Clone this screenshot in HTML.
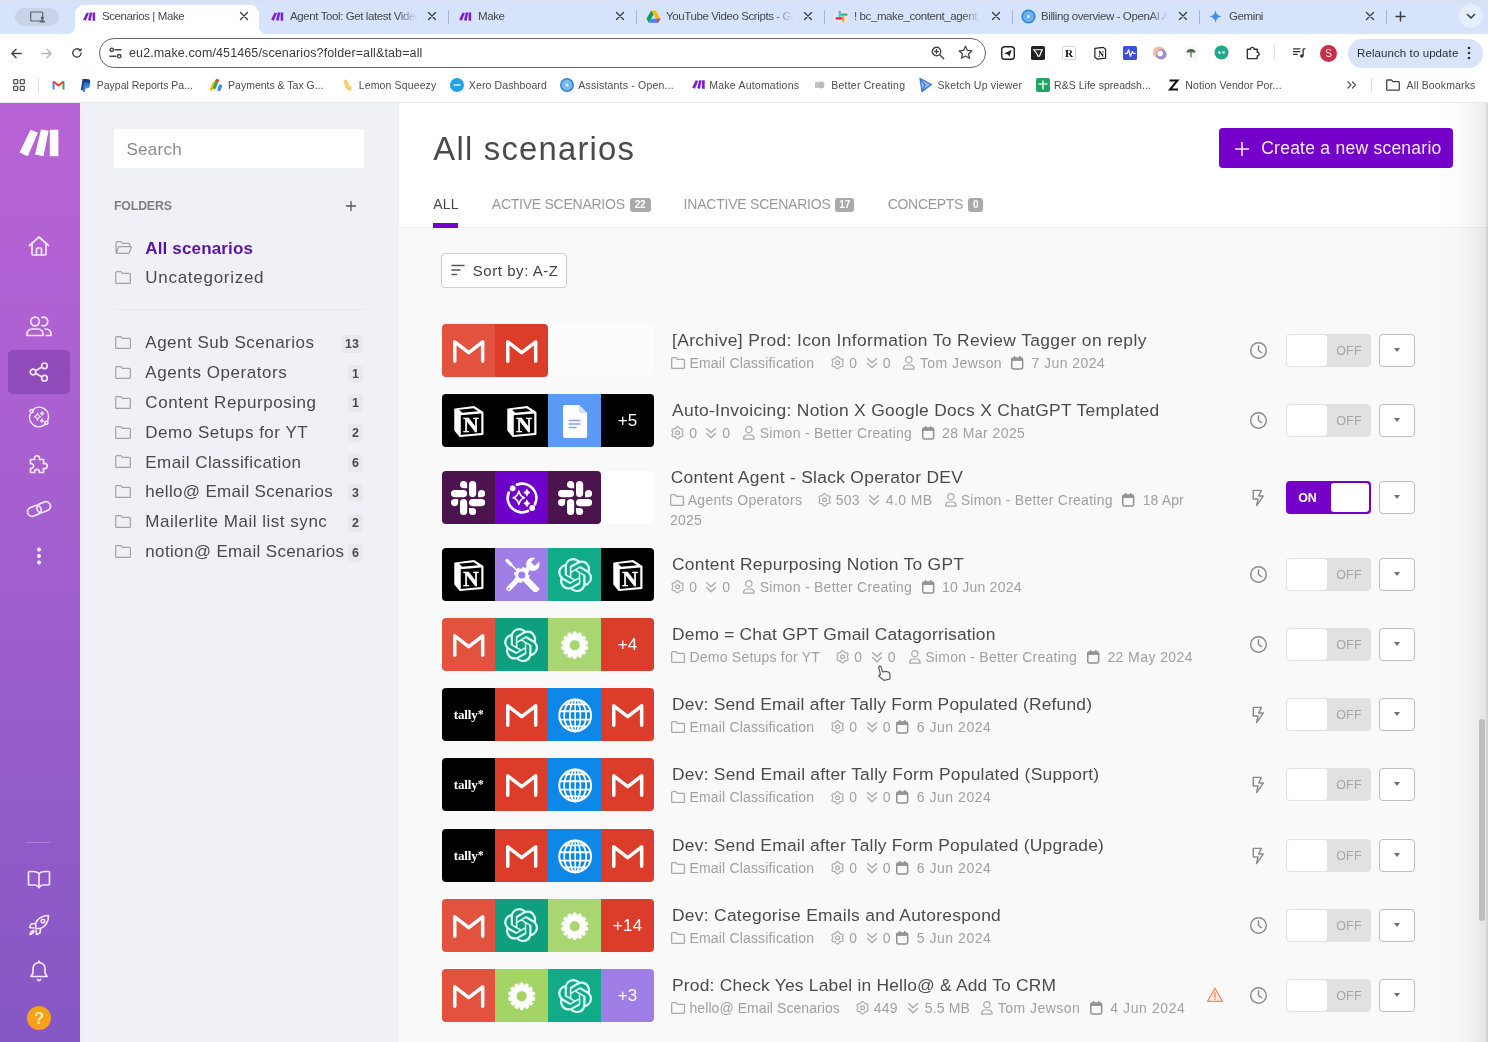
<!DOCTYPE html>
<html lang="en">
<head>
<meta charset="utf-8">
<title>Scenarios | Make</title>
<style>
*{box-sizing:border-box;margin:0;padding:0}
html,body{width:1488px;height:1042px;overflow:hidden;background:#fff}
body{font-family:"Liberation Sans",sans-serif;position:relative;color:#444;-webkit-font-smoothing:antialiased;opacity:.999}
.abs{position:absolute}
svg{display:block;overflow:visible}
/* ---------- browser chrome ---------- */
#tabs{position:absolute;left:0;top:0;width:1488px;height:33.500px;background:linear-gradient(180deg,#d9dfec 0,#d7e2f9 2px,#d7e3fb 3px)}
#tabs .active{position:absolute;left:75px;top:4.500px;width:184px;height:29px;background:#fff;border-radius:9px 9px 0 0}
#tabs .active:before,#tabs .active:after{content:"";position:absolute;bottom:0;width:8px;height:8px}
#tabs .active:before{left:-8px;background:radial-gradient(circle at 0 0,transparent 8px,#fff 8.5px)}
#tabs .active:after{right:-8px;background:radial-gradient(circle at 100% 0,transparent 8px,#fff 8.5px)}
.tt{position:absolute;top:9px;height:15px;line-height:15px;font-size:11.5px;letter-spacing:-.4px;color:#45484c;white-space:nowrap;overflow:hidden}
.tt.f:after{content:"";position:absolute;right:0;top:0;width:18px;height:100%;background:linear-gradient(90deg,rgba(215,227,251,0),#d7e3fb)}
.tx{position:absolute;top:11px;width:10px;height:10px}
.tsep{position:absolute;top:10px;width:1px;height:14px;background:#a9b6d3}
.fav{position:absolute;top:9px;width:15px;height:15px}
#bar{position:absolute;left:0;top:34px;width:1488px;height:36px;background:#fff}
#url{position:absolute;left:98.500px;top:4px;width:887px;height:30px;border:1.800px solid #666;border-radius:15px;background:#fff}
#url .u{position:absolute;left:29.5px;top:6px;font-size:12.5px;line-height:17px;color:#3a3a3a;white-space:nowrap}
#bm{position:absolute;left:0;top:70px;width:1488px;height:32.600px;background:#fff;border-bottom:1px solid #e9e9ea;z-index:5}
.bt{position:absolute;top:8px;height:14px;line-height:14px;font-size:10.500px;color:#4c4c4c;white-space:nowrap}
.bi{position:absolute;top:8px;width:14px;height:14px}
/* ---------- app ---------- */
#rail{position:absolute;left:0;top:102px;width:80px;height:940px;background:linear-gradient(180deg,#b863d5 0%,#aa60d1 35%,#9b5dcc 60%,#8558c5 100%)}
#rail .act{position:absolute;left:8px;top:247.700px;width:61.500px;height:44.500px;border-radius:5px;background:rgba(110,50,160,.45)}
#rail svg{position:absolute}
#fold{position:absolute;left:80px;top:102px;width:319px;height:940px;background:#eff1f6;box-shadow:inset 1.500px 0 0 #f4ebfc}
#search{position:absolute;left:34px;top:26.500px;width:250px;height:39.500px;background:#fff;border-radius:3px;font-size:17px;line-height:41px;padding-left:12.5px;color:#8b8b8b;letter-spacing:.25px}
.fh{position:absolute;left:34px;top:97.3px;font-size:12.3px;line-height:14px;font-weight:bold;color:#7f7f7f;letter-spacing:-.15px}
.fi{position:absolute;left:34.5px;width:17px;height:15px}
.fn{position:absolute;left:65.3px;font-size:17px;line-height:22px;color:#4a4a4a;white-space:nowrap}
.fn.sel{font-weight:bold;color:#5b13a3}
.fc{position:absolute;right:36.3px;min-width:13.7px;height:18px;border-radius:4px;background:#e8e9ed;font-size:12.5px;line-height:18px;font-weight:bold;color:#4a4a4a;text-align:center;padding:0 3.8px}
#main{position:absolute;left:399px;top:102px;width:1089px;height:940px;background:#f9f9f9}
#hdr{position:absolute;left:0;top:0;width:1089px;height:125.500px;background:#fff;border-bottom:1px solid #f0f0f0}
#h1{position:absolute;left:34.300px;top:25.800px;font-size:32.800px;line-height:42px;color:#4a4a4a;font-weight:normal;white-space:nowrap}
#create{position:absolute;left:819.700px;top:26.300px;width:234.500px;height:39.800px;border-radius:4px;background:#7500c9;color:#f6eaff;font-size:17.500px;line-height:40.800px;white-space:nowrap}
#create span{position:absolute;left:42.5px;top:0}
.tab{position:absolute;top:94px;font-size:14px;line-height:17px;color:#999;white-space:nowrap}
.tab.on{color:#484848}
.tb{position:absolute;top:95.700px;height:14.600px;letter-spacing:-.2px;border-radius:3px;background:#aaa;color:#fff;font-size:10px;line-height:14px;font-weight:bold;text-align:center}
#ul{position:absolute;left:34px;top:120.600px;width:25.200px;height:5.400px;background:#7500c9}
#sort{position:absolute;left:42.3px;top:151.3px;width:126px;height:35px;border:1px solid #cfcfcf;border-radius:4px;background:#fff;font-size:15px;line-height:33px;color:#444;white-space:nowrap}
#sort span{position:absolute;left:30.5px;top:0}
/* rows */
.row{position:absolute;left:0;width:1089px;height:53px}
.ic{position:absolute;left:42.6px;top:0;width:212.6px;height:53px;border-radius:4px}
.ig{position:absolute;left:0;top:0;height:53px;border-radius:4px;overflow:hidden;display:flex}
.ig>div{width:53.15px;height:53px;position:relative;flex:none}
.ig svg{position:absolute;left:0;top:0;width:53.15px;height:53px}
.pl{color:#fff;font-size:17px;line-height:53px;text-align:center;letter-spacing:.2px}
.tly{color:#fff;font-family:"Liberation Serif",serif;font-weight:bold;font-size:13px;line-height:54px;text-align:center;letter-spacing:-.1px;padding-left:1px}
.tly sup{font-size:12px;vertical-align:1.500px;line-height:0}
.ti{position:absolute;font-size:17.4px;line-height:22px;color:#4b4b4b;white-space:nowrap}
.m{position:absolute;font-size:14px;line-height:18px;color:#a0a0a0;white-space:nowrap}
.mi{position:absolute;width:16px;height:16px;color:#a9a9a9}
.mi.c{color:#919191}
.tg{position:absolute;left:887px;top:10px;width:85px;height:33px;border-radius:4px;background:#e1e1e1;border:1px solid #e1e1e1;overflow:hidden}
.tg i{position:absolute;left:0;top:0;width:40px;height:31px;background:#fff;border-radius:3px}
.tg b{position:absolute;left:40px;top:0;width:44px;line-height:33.500px;font-size:12.500px;font-weight:normal;color:#a6a6a6;text-align:center;letter-spacing:.2px}
.tg.on{background:#7500c9;border:2px solid #7500c9}
.tg.on i{left:43px;width:38px;height:29px}
.tg.on b{left:0;width:39px;color:#fff;line-height:30px;font-size:12.500px;font-weight:bold;letter-spacing:0}
.dd{position:absolute;left:979.700px;top:10px;width:36.200px;height:33px;border:1px solid #bdbdbd;border-radius:4px;background:#fff}
.dd:after{content:"";position:absolute;left:13.900px;top:13px;border:3.500px solid transparent;border-top:4px solid #6e6e6e;border-bottom:0}
.st{position:absolute;left:849.5px;top:17px;width:19px;height:19px;color:#8a8a8a}
#sb{position:absolute;left:1034px;top:0;width:55px;height:940px;background:linear-gradient(90deg,rgba(0,0,0,0) 0%,rgba(0,0,0,.008) 35%,rgba(0,0,0,.03) 70%,rgba(0,0,0,.075) 92%,rgba(0,0,0,.085) 96.500%,rgba(0,0,0,.17) 98%,rgba(0,0,0,.17) 100%);pointer-events:none}
#sb i{position:absolute;left:45.500px;top:616.500px;width:6.500px;height:202.500px;border-radius:3.500px;background:#bfbfbf}
</style>
</head>
<body>
<svg width="0" height="0" style="position:absolute">
<defs>
<symbol id="gmail" viewBox="0 0 53 53"><path d="M12.700 37.200V17.800L26.650 28.700 40.600 17.800V37.200" fill="none" stroke="#fff" stroke-width="3.500" stroke-linejoin="round" stroke-linecap="round"/></symbol>
<symbol id="notion" viewBox="0 0 53 53">
<path d="M13 15.200 32 12.800l8.600 5.500v21.800L18 42.300 13 36.300z" fill="#fff" stroke="#fff" stroke-width="1.600" stroke-linejoin="round"/>
<path d="M17 15.800 31.500 14.300l4.500 2.900-15.800 1.600z" fill="#000"/>
<path d="M18.700 21.300 39.200 19.400V39.100L18.700 40.900z" fill="#000"/>
<text x="28.900" y="37.500" font-family="Liberation Serif,serif" font-weight="bold" font-size="21.500" text-anchor="middle" fill="#fff" stroke="#fff" stroke-width=".5">N</text>
</symbol>
<symbol id="gdocs" viewBox="0 0 53 53"><path d="M17 11h14l8 8v23a2 2 0 0 1-2 2H17a2 2 0 0 1-2-2V13a2 2 0 0 1 2-2z" fill="#fff"/><path d="M31 11v6a2 2 0 0 0 2 2h6z" fill="#cfe1fb"/><path d="M20.5 26.5h12M20.5 30h12M20.5 33.500h8" stroke="#86a5ea" stroke-width="1.700"/></symbol>
<symbol id="slack" viewBox="0 0 24 24"><path fill="#fff" d="M5.042 15.165a2.528 2.528 0 0 1-2.52 2.523A2.528 2.528 0 0 1 0 15.165a2.527 2.527 0 0 1 2.522-2.52h2.52v2.52zM6.313 15.165a2.527 2.527 0 0 1 2.521-2.52 2.527 2.527 0 0 1 2.521 2.52v6.313A2.528 2.528 0 0 1 8.834 24a2.528 2.528 0 0 1-2.521-2.522v-6.313zM8.834 5.042a2.528 2.528 0 0 1-2.521-2.52A2.528 2.528 0 0 1 8.834 0a2.528 2.528 0 0 1 2.521 2.522v2.52H8.834zM8.834 6.313a2.528 2.528 0 0 1 2.521 2.521 2.528 2.528 0 0 1-2.521 2.521H2.522A2.528 2.528 0 0 1 0 8.834a2.528 2.528 0 0 1 2.522-2.521h6.312zM18.956 8.834a2.528 2.528 0 0 1 2.522-2.521A2.528 2.528 0 0 1 24 8.834a2.528 2.528 0 0 1-2.522 2.521h-2.522V8.834zM17.688 8.834a2.528 2.528 0 0 1-2.523 2.521 2.527 2.527 0 0 1-2.52-2.521V2.522A2.527 2.527 0 0 1 15.165 0a2.528 2.528 0 0 1 2.523 2.522v6.312zM15.165 18.956a2.528 2.528 0 0 1 2.523 2.522A2.528 2.528 0 0 1 15.165 24a2.527 2.527 0 0 1-2.52-2.522v-2.522h2.52zM15.165 17.688a2.527 2.527 0 0 1-2.52-2.523 2.526 2.526 0 0 1 2.52-2.520h6.313A2.527 2.527 0 0 1 24 15.165a2.528 2.528 0 0 1-2.522 2.523h-6.313z"/></symbol>
<symbol id="openai" viewBox="0 0 24 24"><path fill="#d9fff3" d="M22.2819 9.8211a5.9847 5.9847 0 0 0-.5157-4.9108 6.0462 6.0462 0 0 0-6.5098-2.9A6.0651 6.0651 0 0 0 4.9807 4.1818a5.9847 5.9847 0 0 0-3.9977 2.9 6.0462 6.0462 0 0 0 .7427 7.0966 5.98 5.98 0 0 0 .511 4.9107 6.051 6.051 0 0 0 6.5146 2.9001A5.9847 5.9847 0 0 0 13.2599 24a6.0557 6.0557 0 0 0 5.7718-4.2058 5.9894 5.9894 0 0 0 3.9977-2.9001 6.0557 6.0557 0 0 0-.7475-7.0729zm-9.022 12.6081a4.4755 4.4755 0 0 1-2.8764-1.0408l.1419-.0804 4.7783-2.7582a.7948.7948 0 0 0 .3927-.6813v-6.7369l2.02 1.1686a.071.071 0 0 1 .038.052v5.5826a4.504 4.504 0 0 1-4.4945 4.4944zm-9.6607-4.1254a4.4708 4.4708 0 0 1-.5346-3.0137l.142.0852 4.783 2.7582a.7712.7712 0 0 0 .7806 0l5.8428-3.3685v2.3324a.0804.0804 0 0 1-.0332.0615L9.74 19.9502a4.4992 4.4992 0 0 1-6.1408-1.6464zM2.3408 7.8956a4.485 4.485 0 0 1 2.3655-1.9728V11.6a.7664.7664 0 0 0 .3879.6765l5.8144 3.3543-2.0201 1.1685a.0757.0757 0 0 1-.071 0l-4.8303-2.7865A4.504 4.504 0 0 1 2.3408 7.872zm16.5963 3.8558L13.1038 8.364 15.1192 7.2a.0757.0757 0 0 1 .071 0l4.8303 2.7913a4.4944 4.4944 0 0 1-.6765 8.1042v-5.6772a.79.79 0 0 0-.407-.667zm2.0107-3.0231l-.142-.0852-4.7735-2.7818a.7759.7759 0 0 0-.7854 0L9.409 9.2297V6.8974a.0662.0662 0 0 1 .0284-.0615l4.8303-2.7866a4.4992 4.4992 0 0 1 6.6802 4.66zM8.3065 12.863l-2.02-1.1638a.0804.0804 0 0 1-.038-.0567V6.0742a4.4992 4.4992 0 0 1 7.3757-3.4537l-.142.0805L8.704 5.459a.7948.7948 0 0 0-.3927.6813zm1.0976-2.3654l2.602-1.4998 2.6069 1.4998v2.9994l-2.5974 1.4997-2.6067-1.4997Z"/></symbol>
<symbol id="gear" viewBox="0 0 53 53"><path d="M24.65 16.48L25.23 13.97L27.97 13.97L28.55 16.48L29.50 16.69L31.11 14.69L33.57 15.88L33.01 18.38L33.77 18.99L36.09 17.88L37.80 20.02L36.20 22.03L36.62 22.92L39.19 22.92L39.80 25.59L37.49 26.71L37.49 27.69L39.80 28.81L39.19 31.48L36.62 31.48L36.20 32.37L37.80 34.38L36.09 36.52L33.77 35.41L33.01 36.02L33.57 38.52L31.11 39.71L29.50 37.71L28.55 37.92L27.97 40.43L25.23 40.43L24.65 37.92L23.70 37.71L22.09 39.71L19.63 38.52L20.19 36.02L19.43 35.41L17.11 36.52L15.40 34.38L17.00 32.37L16.58 31.48L14.01 31.48L13.40 28.81L15.71 27.69L15.71 26.71L13.40 25.59L14.01 22.92L16.58 22.92L17.00 22.03L15.40 20.02L17.11 17.88L19.43 18.99L20.19 18.38L19.63 15.88L22.09 14.69L23.70 16.69zM32.10 27.20A5.5 5.5 0 1 0 21.10 27.20A5.5 5.5 0 1 0 32.10 27.20z" fill="#fff" fill-rule="evenodd" stroke="#fff" stroke-width=".8" stroke-linejoin="round"/></symbol>
<symbol id="globe" viewBox="0 0 53 53"><g fill="none" stroke="#fff" stroke-width="2"><circle cx="27.100" cy="27.400" r="15.900"/><ellipse cx="27.100" cy="27.400" rx="5.300" ry="15.900" stroke-width="1.700"/><ellipse cx="27.100" cy="27.400" rx="11" ry="15.900" stroke-width="1.700"/><path d="M27.100 11.500v31.800" stroke-width="1.500"/><path d="M11.800 23.200h30.600M11.800 31.600h30.600M16 16.400h22.200M16 38.400h22.200" stroke-width="1.900"/></g></symbol>
<symbol id="tools" viewBox="0 0 53 53">
<mask id="tm"><rect width="53" height="53" fill="#fff"/><path d="M37.800 16.200 46 8" stroke="#000" stroke-width="5.400"/><circle cx="26.700" cy="27" r="3.600" fill="#000"/><circle cx="13.700" cy="40.700" r="1" fill="#000"/></mask>
<g mask="url(#tm)"><g stroke="#fff" fill="none">
<path d="M12 12.600 15.800 16.400" stroke-width="3.400" stroke-linecap="round"/><path d="M15 15.500 23.500 24" stroke-width="1.700"/>
<path d="M30 30.500 40.300 41" stroke-width="6.400" stroke-linecap="square"/>
<path d="M13.900 40.500 23.500 30.500" stroke-width="5" stroke-linecap="round"/>
<path d="M29.500 24 34.500 19" stroke-width="4.400"/></g>
<circle cx="37.800" cy="16.300" r="6.700" fill="#fff"/>
<circle cx="26.700" cy="27" r="6.500" fill="#fff"/>
<circle cx="26.700" cy="27" r="7" fill="none" stroke="#fff" stroke-width="1.800" stroke-dasharray="2.750 2.750"/></g></symbol>
<symbol id="agent" viewBox="0 0 53 53"><g fill="none" stroke="#fff" stroke-width="2.800" stroke-linecap="round"><path d="M21.900 13.650A14.300 14.300 0 0 1 39.850 33.270"/><path d="M32.800 40.060A14.300 14.300 0 0 1 13.740 21.640"/></g><circle cx="17.600" cy="17.300" r="2.900" fill="#fff"/><circle cx="37.100" cy="37" r="2.900" fill="#fff"/><path d="M23.80 20.10Q25.03 25.25 29.40 26.70Q25.03 28.15 23.80 33.30Q22.57 28.15 18.20 26.70Q22.57 25.25 23.80 20.10z" fill="none" stroke="#fff" stroke-width="1.700" stroke-linejoin="round"/><path d="M31.80 18.00Q32.50 20.81 35.00 21.60Q32.50 22.39 31.80 25.20Q31.10 22.39 28.60 21.60Q31.10 20.81 31.80 18.00zM31.80 28.80Q32.50 31.61 35.00 32.40Q32.50 33.19 31.80 36.00Q31.10 33.19 28.60 32.40Q31.10 31.61 31.80 28.80z" fill="#fff" stroke="#fff" stroke-width=".6" stroke-linejoin="round"/></symbol>
<!-- meta icons -->
<symbol id="mfolder" viewBox="0 0 16 16"><path d="M1.650 .650h3.300l1.700 1.800h5.800a1 1 0 0 1 1 1v7a1 1 0 0 1-1 1H1.650a1 1 0 0 1-1-1V1.650a1 1 0 0 1 1-1z" fill="none" stroke="currentColor" stroke-width="1.300" stroke-linejoin="round"/></symbol>
<symbol id="mgear" viewBox="0 0 16 16"><path d="M6.55 0.55L7.08 0.67L7.56 1.01L7.96 1.49L8.29 1.98L8.58 2.40L8.90 2.68L9.30 2.82L9.81 2.86L10.40 2.90L11.01 3.01L11.55 3.25L11.92 3.65L12.08 4.17L12.02 4.76L11.81 5.34L11.55 5.87L11.33 6.33L11.25 6.75L11.33 7.17L11.55 7.63L11.81 8.16L12.02 8.74L12.08 9.33L11.92 9.85L11.55 10.25L11.01 10.49L10.40 10.60L9.81 10.64L9.30 10.68L8.90 10.82L8.58 11.10L8.29 11.52L7.96 12.01L7.56 12.49L7.08 12.83L6.55 12.95L6.02 12.83L5.54 12.49L5.14 12.01L4.81 11.52L4.52 11.10L4.20 10.82L3.80 10.68L3.29 10.64L2.70 10.60L2.09 10.49L1.55 10.25L1.18 9.85L1.02 9.33L1.08 8.74L1.29 8.16L1.55 7.63L1.77 7.17L1.85 6.75L1.77 6.33L1.55 5.87L1.29 5.34L1.08 4.76L1.02 4.17L1.18 3.65L1.55 3.25L2.09 3.01L2.70 2.90L3.29 2.86L3.80 2.82L4.20 2.68L4.52 2.40L4.81 1.98L5.14 1.49L5.54 1.01L6.02 0.67z" fill="none" stroke="currentColor" stroke-width="1.200" stroke-linejoin="round"/><circle cx="6.550" cy="6.750" r="1.900" fill="none" stroke="currentColor" stroke-width="1.200"/></symbol>
<symbol id="mchev" viewBox="0 0 16 16"><path d="M.700 .700 5.050 4.800 9.400 .700M.700 5.600 5.050 9.700 9.400 5.600" fill="none" stroke="currentColor" stroke-width="1.400" stroke-linecap="round" stroke-linejoin="round"/></symbol>
<symbol id="muser" viewBox="0 0 16 16"><circle cx="5.850" cy="3.700" r="3.100" fill="none" stroke="currentColor" stroke-width="1.200"/><path d="M.600 13.200v-.800a3.400 3.400 0 0 1 3.400-3.400h3.700a3.400 3.400 0 0 1 3.400 3.400v.800z" fill="none" stroke="currentColor" stroke-width="1.200" stroke-linejoin="round"/></symbol>
<symbol id="mcal" viewBox="0 0 16 16"><rect x=".750" y="1.900" width="10.900" height="11.150" rx="1.700" fill="none" stroke="currentColor" stroke-width="1.500"/><path d="M.750 3.600h10.900" stroke="currentColor" stroke-width="2.600"/><path d="M3.600 .600v2M8.800 .600v2" stroke="currentColor" stroke-width="1.500" stroke-linecap="round"/></symbol>
<symbol id="clock" viewBox="0 0 20 20"><circle cx="10" cy="10" r="8.200" fill="none" stroke="currentColor" stroke-width="1.500"/><path d="M10 5.200V10l3.200 2.200" fill="none" stroke="currentColor" stroke-width="1.500" stroke-linecap="round" stroke-linejoin="round"/></symbol>
<symbol id="bolt" viewBox="0 0 20 20"><path d="M4.500 2.500h8.500l-2.800 6h4.800L8 18.500l1.500-7H4.500z" fill="none" stroke="currentColor" stroke-width="1.500" stroke-linejoin="round"/></symbol>
<symbol id="warn" viewBox="0 0 20 20"><path d="M10 2.500 18.300 17H1.700z" fill="#fde8df" stroke="#f08a5d" stroke-width="1.400" stroke-linejoin="round"/><path d="M10 7.500v5" stroke="#f08a5d" stroke-width="1.500" stroke-linecap="round"/><circle cx="10" cy="14.700" r=".9" fill="#f08a5d"/></symbol>
<symbol id="ffold" viewBox="0 0 18 16"><path d="M1.700 1.800h4.600l1.700 1.900h7.300a1 1 0 0 1 1 1v8.600a1 1 0 0 1-1 1H1.700a1 1 0 0 1-1-1V2.800a1 1 0 0 1 1-1z" fill="none" stroke="#a3a3a3" stroke-width="1.300" stroke-linejoin="round"/></symbol>
<symbol id="ffoldo" viewBox="0 0 18 16"><path d="M1 13.500V2.800a1 1 0 0 1 1-1h4.300L8 3.700h6.500a1 1 0 0 1 1 1v2M1.200 14.200l2.300-6.500a1 1 0 0 1 1-.7h12.200a.7.700 0 0 1 .6 1l-2.100 5.600a1 1 0 0 1-1 .7H1.700a.6.600 0 0 1-.5-.100z" fill="none" stroke="#a3a3a3" stroke-width="1.300" stroke-linejoin="round"/></symbol>
<symbol id="mk" viewBox="0 0 40 28"><path d="M11.500 .800 19 3.400 8.800 27.200 .500 23.600z"/><path d="M22 .500l7.600 1.300L24.500 27.200 16 25.600z"/><path d="M30.800 .800h8.600v26.400h-8.600z"/></symbol>
<symbol id="tabx" viewBox="0 0 10 10"><path d="M1.500 1.500l7 7M8.500 1.500l-7 7" stroke="#3c4043" stroke-width="1.400" stroke-linecap="round"/></symbol>
</defs>
</svg>
<div id="tabs">
  <div class="abs" style="left:15px;top:8px;width:44px;height:18px;border-radius:9px;background:#c9d3e8"></div>
  <svg class="abs" style="left:30px;top:11px" width="16" height="12" viewBox="0 0 16 12"><rect x=".7" y="1" width="12" height="9" rx="1" fill="none" stroke="#5f6368" stroke-width="1.200"/><circle cx="12.300" cy="7" r="1.600" fill="#5f6368"/><path d="M9.500 11.500a2.800 2.300 0 0 1 5.600 0z" fill="#5f6368"/></svg>
  <div class="active"></div>
  <svg class="fav" style="left:83px;top:11.500px;width:12.500px;height:9px;fill:#7a1fd1"><use href="#mk"/></svg>
  <div class="tt" style="left:102px;width:130px">Scenarios | Make</div>
  <svg class="tx" style="left:239px"><use href="#tabx"/></svg>

  <svg class="fav" style="left:271px;top:11.500px;width:12.500px;height:9px;fill:#7a1fd1"><use href="#mk"/></svg>
  <div class="tt f" style="left:290px;width:127px">Agent Tool: Get latest Video</div>
  <svg class="tx" style="left:427px"><use href="#tabx"/></svg>
  <div class="tsep" style="left:448px"></div>

  <svg class="fav" style="left:459px;top:11.500px;width:12.500px;height:9px;fill:#7a1fd1"><use href="#mk"/></svg>
  <div class="tt" style="left:478px;width:127px">Make</div>
  <svg class="tx" style="left:615px"><use href="#tabx"/></svg>
  <div class="tsep" style="left:636px"></div>

  <svg class="fav" style="left:646px" viewBox="0 0 15 15"><path d="M5.200 1.500h4.600l4.700 8.200h-4.600z" fill="#fbbc04"/><path d="M5.200 1.500 .5 9.700l2.300 4 4.700-8.200z" fill="#0f9d58"/><path d="M5.100 9.700h9.400l-2.300 4H2.800z" fill="#4285f4"/><path d="M9.900 9.700h4.600l-2.300 4z" fill="#ea4335"/></svg>
  <div class="tt f" style="left:666px;width:127px">YouTube Video Scripts - Google</div>
  <svg class="tx" style="left:803px"><use href="#tabx"/></svg>
  <div class="tsep" style="left:824px"></div>

  <svg class="fav" style="left:834px" viewBox="0 0 15 15"><rect width="15" height="15" rx="7" fill="#e9e3ee"/><g stroke-width="2.200" stroke-linecap="round"><path d="M5.700 2.500v5" stroke="#36c5f0"/><path d="M12.500 5.700h-5" stroke="#2eb67d"/><path d="M9.300 12.500v-5" stroke="#ecb22e"/><path d="M2.500 9.300h5" stroke="#e01e5a"/></g></svg>
  <div class="tt f" style="left:854px;width:127px">! bc_make_content_agent_dev</div>
  <svg class="tx" style="left:991px"><use href="#tabx"/></svg>
  <div class="tsep" style="left:1012px"></div>

  <svg class="fav" style="left:1021px" viewBox="0 0 15 15"><circle cx="7.500" cy="7.500" r="6.300" fill="#6fb1ef" stroke="#2a86dd" stroke-width="1.600"/><circle cx="7.500" cy="7.500" r="1.500" fill="#d6ebff"/></svg>
  <div class="tt f" style="left:1041px;width:127px">Billing overview - OpenAI API</div>
  <svg class="tx" style="left:1178px"><use href="#tabx"/></svg>
  <div class="tsep" style="left:1199px"></div>

  <svg class="fav" style="left:1209px;top:10px;width:13px;height:13px" viewBox="0 0 14 14"><path d="M7 0q.6 6.400 7 7q-6.400.6-7 7q-.6-6.400-7-7q6.400-.6 7-7z" fill="#4b8be8"/></svg>
  <div class="tt" style="left:1229px;width:127px">Gemini</div>
  <svg class="tx" style="left:1365px"><use href="#tabx"/></svg>
  <div class="tsep" style="left:1386px"></div>
  <svg class="abs" style="left:1395px;top:11px" width="11" height="11" viewBox="0 0 11 11"><path d="M5.500 1v9M1 5.500h9" stroke="#3c4043" stroke-width="1.500" stroke-linecap="round"/></svg>
  <div class="abs" style="left:1459px;top:4px;width:24px;height:24px;border-radius:12px;background:#e6edfb"></div>
  <svg class="abs" style="left:1466px;top:13px" width="10" height="7" viewBox="0 0 10 7"><path d="M1.500 1.500 5 5l3.500-3.500" fill="none" stroke="#3c4043" stroke-width="1.600" stroke-linecap="round" stroke-linejoin="round"/></svg>
</div>
<div id="bar">
  <svg class="abs" style="left:10.500px;top:13.500px" width="11" height="11" viewBox="0 0 13 13"><path d="M12 6.500H1.500M6 1.500l-5 5 5 5" fill="none" stroke="#444" stroke-width="1.700" stroke-linecap="round" stroke-linejoin="round"/></svg>
  <svg class="abs" style="left:40.500px;top:13.500px" width="11" height="11" viewBox="0 0 13 13"><path d="M1 6.500h10.500M7 1.500l5 5-5 5" fill="none" stroke="#b5b5b5" stroke-width="1.500" stroke-linecap="round" stroke-linejoin="round"/></svg>
  <svg class="abs" style="left:71px;top:12.500px" width="12" height="12" viewBox="0 0 14 14"><path d="M11.800 7A4.900 4.900 0 1 1 10.300 3.400" fill="none" stroke="#444" stroke-width="1.500" stroke-linecap="round"/><path d="M12.300 1v4H8.300z" fill="#444"/></svg>
  <div id="url">
    <svg class="abs" style="left:9px;top:8px" width="13" height="12" viewBox="0 0 13 12"><g stroke="#444" stroke-width="1.400" fill="none" stroke-linecap="round"><path d="M6 2.800h6M1 9.200h6"/><circle cx="2.800" cy="2.800" r="1.700"/><circle cx="10.200" cy="9.200" r="1.700"/></g></svg>
    <div class="u" style="letter-spacing:0.12px">eu2.make.com/451465/scenarios?folder=all&amp;tab=all</div>
    <svg class="abs" style="left:831px;top:7px" width="14" height="14" viewBox="0 0 14 14"><g stroke="#444" stroke-width="1.400" fill="none" stroke-linecap="round"><circle cx="5.500" cy="5.500" r="4.200"/><path d="M8.700 8.700l4 4M3.700 5.500h3.600M5.500 3.700v3.600"/></g></svg>
    <svg class="abs" style="left:858px;top:6px" width="15" height="15" viewBox="0 0 15 15"><path d="M7.500 1.300l1.900 4.100 4.400.5-3.300 3 1 4.400-4-2.300-4 2.300 1-4.400-3.300-3 4.400-.5z" fill="none" stroke="#444" stroke-width="1.300" stroke-linejoin="round"/></svg>
  </div>
  <!-- extensions -->
  <svg class="abs" style="left:1000.5px;top:12.2px" width="14" height="14" viewBox="0 0 15 15"><rect x=".8" y=".8" width="13.400" height="13.400" rx="3" fill="#fff" stroke="#222" stroke-width="1.500"/><path d="M3.500 8 11.500 4 9 11.500 7.500 9z" fill="#222"/></svg>
  <svg class="abs" style="left:1030.5px;top:12.2px" width="14" height="14" viewBox="0 0 15 15"><rect width="15" height="15" rx="2" fill="#222"/><path d="M3 4h9l-3 7H7.500L6 7.500 4.500 6z" fill="none" stroke="#fff" stroke-width="1.300"/></svg>
  <svg class="abs" style="left:1061.5px;top:12.2px" width="14" height="14" viewBox="0 0 15 15"><rect x=".5" y=".5" width="14" height="14" rx="1.500" fill="#fff" stroke="#cfcfcf"/><text x="7.500" y="12" font-family="Liberation Serif,serif" font-weight="bold" font-size="12" text-anchor="middle" fill="#111">R</text></svg>
  <svg class="abs" style="left:1092.5px;top:12.2px" width="14" height="14" viewBox="0 0 15 15"><path d="M2 2.500 11 1.500 13.500 3.500V13L4.500 14 2 12z" fill="#fff" stroke="#222" stroke-width="1.300" stroke-linejoin="round"/><text x="8.600" y="11.500" font-family="Liberation Serif,serif" font-weight="bold" font-size="8.500" text-anchor="middle" fill="#111">N</text></svg>
  <svg class="abs" style="left:1122.5px;top:12.2px" width="14" height="14" viewBox="0 0 15 15"><rect width="15" height="15" rx="2" fill="#3d4fd8"/><path d="M2 8h2.500l1.500-4 2 7 2-5 1 2H13.500" fill="none" stroke="#fff" stroke-width="1.300" stroke-linejoin="round"/></svg>
  <svg class="abs" style="left:1151.5px;top:11.2px" width="16" height="16" viewBox="0 0 17 17"><circle cx="7.500" cy="8" r="6.500" fill="#f3b9a9"/><circle cx="10" cy="10" r="5.500" fill="#8e7fd6" opacity=".85"/><circle cx="8.700" cy="9" r="3" fill="#fff"/></svg>
  <svg class="abs" style="left:1183.5px;top:12.2px" width="14" height="14" viewBox="0 0 15 15"><rect width="15" height="15" rx="3" fill="#f6faf4"/><path d="M2.500 7a5 3.800 0 0 1 10 0z" fill="#4c6a4f"/><path d="M7.500 7v5" stroke="#4c6a4f" stroke-width="1.300"/></svg>
  <svg class="abs" style="left:1213.5px;top:11.2px" width="15" height="15" viewBox="0 0 16 16"><circle cx="8" cy="8" r="7.500" fill="#1fa88a"/><circle cx="5.800" cy="8" r="1.300" fill="#fff"/><circle cx="10.200" cy="8" r="1.300" fill="#fff"/></svg>
  <svg class="abs" style="left:1244.5px;top:11.2px" width="15" height="15" viewBox="0 0 16 16"><path d="M2.500 4.500h3.300a2 2 0 1 1 4 0H13v3.200a2 2 0 1 1 0 4V14.500H2.500z" fill="none" stroke="#333" stroke-width="1.500" stroke-linejoin="round"/></svg>
  <div class="abs" style="left:1274px;top:10px;width:1px;height:16px;background:#e2e2e2"></div>
  <svg class="abs" style="left:1291.5px;top:13.2px" width="14" height="12" viewBox="0 0 15 13"><path d="M1 2h8M1 5h8M1 8h5" stroke="#333" stroke-width="1.400" fill="none"/><path d="M12 2v7.500M12 2h2.500" stroke="#333" stroke-width="1.400" fill="none"/><circle cx="10.500" cy="9.800" r="1.900" fill="#333"/></svg>
  <div class="abs" style="left:1320px;top:10.700px;width:17px;height:17px;border-radius:50%;background:#c5304a;color:#fbe3e6;font-size:10px;line-height:17px;text-align:center">S</div>
  <div class="abs" style="left:1347.500px;top:4.500px;width:135px;height:29px;border-radius:15px;background:#d9e4fb"></div>
  <div class="abs" style="left:1357px;top:12px;font-size:11.500px;line-height:15px;color:#2b2f36;white-space:nowrap;letter-spacing:0.09px">Relaunch to update</div>
  <svg class="abs" style="left:1467px;top:12px" width="4" height="14" viewBox="0 0 4 14"><circle cx="2" cy="2" r="1.300" fill="#333"/><circle cx="2" cy="7" r="1.300" fill="#333"/><circle cx="2" cy="12" r="1.300" fill="#333"/></svg>
</div>
<div id="bm">
  <svg class="abs" style="left:13px;top:9px" width="12" height="12" viewBox="0 0 12 12"><g fill="none" stroke="#555" stroke-width="1.300"><rect x=".7" y=".7" width="4" height="4" rx=".5"/><rect x="7.300" y=".7" width="4" height="4" rx=".5"/><rect x=".7" y="7.300" width="4" height="4" rx=".5"/><rect x="7.300" y="7.300" width="4" height="4" rx=".5"/></g></svg>
  <div class="abs" style="left:38px;top:8px;width:1px;height:15px;background:#ddd"></div>
  <svg class="abs" style="left:52px;top:10px" width="13" height="10" viewBox="0 0 13 10"><path d="M1.500 9.500V1.500" stroke="#4285f4" stroke-width="2" fill="none"/><path d="M11.500 9.500V1.500" stroke="#34a853" stroke-width="2" fill="none"/><path d="M1.500 1.500l5 4 5-4" stroke="#ea4335" stroke-width="2" fill="none" stroke-linejoin="round"/></svg>
  <svg class="abs" style="left:80px;top:8px" width="11" height="14" viewBox="0 0 11 14"><path d="M2.500 1h4.800c2 0 3.200 1.200 2.900 3.200-.4 2.500-2 3.700-4.300 3.700H4.600L3.800 12H1z" fill="#1e3a8a"/><path d="M4 4.500h3.800c1.700 0 2.700 1 2.400 2.800-.4 2.200-1.800 3.200-3.800 3.200H5.500L4.900 14H2.500z" fill="#2f7fd6" opacity=".9"/></svg>
  <div class="bt" style="left:96.8px;letter-spacing:-0.01px">Paypal Reports Pa...</div>
  <svg class="abs" style="left:209px;top:8px" width="14" height="14" viewBox="0 0 14 14"><g stroke-width="3.200" stroke-linecap="round"><path d="M2.500 11 5.500 5" stroke="#fbbc04"/><path d="M5.500 9.500 8 3" stroke="#34a853"/><path d="M10 11.500 11.500 8" stroke="#4285f4"/><path d="M8 2.500 8.500 2.500" stroke="#ea4335"/></g></svg>
  <div class="bt" style="left:228.1px;letter-spacing:-0.01px">Payments &amp; Tax G...</div>
  <svg class="abs" style="left:342px;top:8px" width="12" height="14" viewBox="0 0 12 14"><path d="M2 1.500c3 0 4 1.500 4.500 3.500s1 3 3.500 3.500l-1 4.500c-3-.5-5-1.500-6-4.500S1.500 4 2 1.500z" fill="#f5d27a"/></svg>
  <div class="bt" style="left:358.8px;letter-spacing:0.13px">Lemon Squeezy</div>
  <svg class="abs" style="left:450px;top:8px" width="14" height="14" viewBox="0 0 14 14"><circle cx="7" cy="7" r="7" fill="#23a4e0"/><path d="M3.500 7h7" stroke="#d7f0fc" stroke-width="1.500"/></svg>
  <div class="bt" style="left:468.8px;letter-spacing:0.12px">Xero Dashboard</div>
  <svg class="abs" style="left:560px;top:8px" width="14" height="14" viewBox="0 0 14 14"><circle cx="7" cy="7" r="6.200" fill="#7cb7ee" stroke="#2a86dd" stroke-width="1.500"/><circle cx="7" cy="7" r="1.500" fill="#d6ebff"/></svg>
  <div class="bt" style="left:578.3px;letter-spacing:0.20px">Assistants - Open...</div>
  <svg class="abs" style="left:692px;top:10px;width:13px;height:9px;fill:#7a1fd1"><use href="#mk"/></svg>
  <div class="bt" style="left:709.3px;letter-spacing:0.22px">Make Automations</div>
  <svg class="abs" style="left:815px;top:11px" width="10" height="8" viewBox="0 0 10 8"><circle cx="6" cy="4" r="3.500" fill="#bbb"/><path d="M0 2h3M0 4h2.500M0 6h3" stroke="#888" stroke-width="1"/></svg>
  <div class="bt" style="left:831.3px;letter-spacing:0.22px">Better Creating</div>
  <svg class="abs" style="left:919px;top:7px" width="14" height="16" viewBox="0 0 14 16"><path d="M1 1.500 12.500 7.500 3 14.500z" fill="#8eb5e8" stroke="#3f78c9" stroke-width="1.300" stroke-linejoin="round"/><path d="M1 1.500 6 8 3 14.500" fill="none" stroke="#3f78c9" stroke-width="1.100"/></svg>
  <div class="bt" style="left:937.6px;letter-spacing:0.18px">Sketch Up viewer</div>
  <svg class="abs" style="left:1036px;top:8px" width="14" height="14" viewBox="0 0 14 14"><rect width="14" height="14" rx="2" fill="#21a464"/><path d="M7 2.500v9M2.500 6h9" stroke="#d9f5e6" stroke-width="1.600"/></svg>
  <div class="bt" style="left:1054.1px;letter-spacing:0.02px">R&amp;S Life spreadsh...</div>
  <svg class="abs" style="left:1168px;top:9px" width="11" height="12" viewBox="0 0 11 12"><path d="M1.500 1.500h8L2 10.500h8" fill="none" stroke="#111" stroke-width="2" stroke-linejoin="miter"/></svg>
  <div class="bt" style="left:1185.3px;letter-spacing:0.12px">Notion Vendor Por...</div>
  <svg class="abs" style="left:1347px;top:11px" width="10" height="8" viewBox="0 0 10 8"><path d="M1 1l3 3-3 3M5.500 1l3 3-3 3" fill="none" stroke="#555" stroke-width="1.300" stroke-linecap="round" stroke-linejoin="round"/></svg>
  <div class="abs" style="left:1371px;top:8px;width:1px;height:15px;background:#ddd"></div>
  <svg class="abs" style="left:1386px;top:9px" width="14" height="12" viewBox="0 0 14 12"><path d="M1.500 1h4l1.400 1.600h5.600a.8.800 0 0 1 .8.800v7a.8.800 0 0 1-.8.800h-11a.8.800 0 0 1-.8-.8V1.800a.8.800 0 0 1 .8-.8z" fill="none" stroke="#444" stroke-width="1.300" stroke-linejoin="round"/></svg>
  <div class="bt" style="left:1406.6px;letter-spacing:0.13px">All Bookmarks</div>
</div>
<div id="rail">
  <svg style="left:19px;top:27px;width:40px;height:28px;fill:#fff"><use href="#mk"/></svg>
  <!-- home -->
  <svg style="left:28px;top:133px" width="22" height="22" viewBox="0 0 22 22"><g fill="none" stroke="#f4e6ff" stroke-width="1.700" stroke-linejoin="round" stroke-linecap="round"><path d="M1.500 10.500 11 2l9.500 8.500"/><path d="M4 8.500V19a1 1 0 0 0 1 1h12a1 1 0 0 0 1-1V8.500"/><path d="M8.500 20v-6a1 1 0 0 1 1-1h3a1 1 0 0 1 1 1v6"/></g></svg>
  <!-- team -->
  <svg style="left:26px;top:214px" width="26" height="21" viewBox="0 0 26 21"><g fill="none" stroke="#f4e6ff" stroke-width="1.700" stroke-linejoin="round"><circle cx="9" cy="5.500" r="4.300"/><path d="M1 19.500v-1.500a5 5 0 0 1 5-5h6a5 5 0 0 1 5 5v1.500z"/><path d="M15.500 9.300a4.300 4.300 0 1 0 0-7.600"/><path d="M19.500 19.500H25V18a5 5 0 0 0-5-5h-1.500"/></g></svg>
  <div class="act"></div>
  <!-- share -->
  <svg style="left:29px;top:260px" width="20" height="20" viewBox="0 0 20 20"><g fill="none" stroke="#f4e6ff" stroke-width="1.700"><circle cx="4" cy="10" r="2.800"/><circle cx="15.500" cy="3.800" r="2.800"/><circle cx="15.500" cy="16.200" r="2.800"/><path d="M6.500 8.700 13 5.100M6.500 11.300 13 14.900"/></g></svg>
  <!-- agent -->
  <svg style="left:28px;top:304px" width="22" height="22" viewBox="0 0 22 22"><g fill="none" stroke="#f4e6ff" stroke-width="1.600" stroke-linecap="round"><path d="M5 3.600A9.300 9.300 0 0 1 19.800 14"/><path d="M17 18.400A9.300 9.300 0 0 1 2.200 8"/><circle cx="3.600" cy="5.200" r="1.600"/><circle cx="18.400" cy="16.800" r="1.600"/></g><g fill="none" stroke="#f4e6ff" stroke-width="1.100" stroke-linejoin="round"><path d="M9.500 7q.5 3.200 3.200 3.700-2.700.5-3.200 3.700-.5-3.200-3.200-3.700 2.700-.5 3.200-3.700z"/><path d="M14.200 5.500q.3 1.600 1.700 1.900-1.400.3-1.700 1.900-.3-1.600-1.700-1.900 1.400-.3 1.700-1.900zM14 12.800q.3 1.500 1.600 1.800-1.300.3-1.600 1.800-.3-1.500-1.600-1.800 1.300-.3 1.600-1.800z"/></g></svg>
  <!-- puzzle -->
  <svg style="left:28px;top:350px" width="22" height="22" viewBox="0 0 22 22"><path d="M2.500 7.500h4.200a2.600 2.600 0 1 1 4.600 0h4.200v4.200a2.600 2.600 0 1 1 0 4.600V20.500h-4.200a2.400 2.400 0 1 0-4.600 0H2.500v-4.200a2.400 2.400 0 1 0 0-4.600z" fill="none" stroke="#f4e6ff" stroke-width="1.700" stroke-linejoin="round"/></svg>
  <!-- link -->
  <svg style="left:26px;top:398px" width="26" height="18" viewBox="0 0 26 18"><g fill="none" stroke="#f4e6ff" stroke-width="1.700" stroke-linecap="round" transform="rotate(-22 13 9)"><rect x="1" y="4.500" width="14" height="9" rx="4.500"/><rect x="11" y="4.500" width="14" height="9" rx="4.500"/></g></svg>
  <!-- dots -->
  <svg style="left:36px;top:445px" width="6" height="18" viewBox="0 0 6 18"><circle cx="3" cy="2.500" r="1.900" fill="#fff"/><circle cx="3" cy="9" r="1.900" fill="#fff"/><circle cx="3" cy="15.500" r="1.900" fill="#fff"/></svg>
  <div class="abs" style="left:26px;top:740.300px;width:24px;height:1px;background:rgba(255,255,255,.22)"></div>
  <!-- book -->
  <svg style="left:27px;top:768px" width="24" height="19" viewBox="0 0 24 19"><g fill="none" stroke="#f4e6ff" stroke-width="1.700" stroke-linejoin="round" stroke-linecap="round"><path d="M12 3.500C10.500 2 8.500 1.500 6 1.500H2.500a1 1 0 0 0-1 1V14a1 1 0 0 0 1 1H7c2.500 0 4 .8 5 2.500 1-1.700 2.500-2.500 5-2.500h4.500a1 1 0 0 0 1-1V2.500a1 1 0 0 0-1-1H18c-2.500 0-4.500.5-6 2z"/><path d="M12 3.500v14"/></g></svg>
  <!-- rocket -->
  <svg style="left:28px;top:812px" width="22" height="22" viewBox="0 0 22 22"><g fill="none" stroke="#f4e6ff" stroke-width="1.600" stroke-linejoin="round" stroke-linecap="round"><path d="M8 14.500 7.500 9.500C9.500 4.500 14 1.500 20.500 1.500c0 6.500-3 11-8 13z"/><circle cx="15" cy="7" r="1.800"/><path d="M7.500 9.500 3 10l-1.500 3.500 4.500.5M12.500 14.500 12 19l-3.500 1.500-.5-4.500"/><path d="M5.500 16.500c-2 .5-3 2-3.500 4 2-.5 3.500-1.500 4-3.500"/></g></svg>
  <!-- bell -->
  <svg style="left:29px;top:858px" width="20" height="22" viewBox="0 0 20 22"><g fill="none" stroke="#f4e6ff" stroke-width="1.700" stroke-linejoin="round" stroke-linecap="round"><path d="M10 2.500a6 6 0 0 0-6 6v4.500L2 16.500h16l-2-3.500V8.500a6 6 0 0 0-6-6z"/><path d="M8.500 19.500a1.600 1.600 0 0 0 3 0M10 1v1.500"/></g></svg>
  <!-- help -->
  <div class="abs" style="left:27px;top:904px;width:24px;height:24px;border-radius:50%;background:#f6a11a;color:#fbeab5;font-size:16.500px;line-height:24.500px;text-align:center;font-weight:bold">?</div>
</div>
<div id="fold">
  <div id="search">Search</div>
  <div class="fh">FOLDERS</div>
  <svg class="abs" style="left:265px;top:98px" width="12" height="12" viewBox="0 0 12 12"><path d="M6 1v10M1 6h10" stroke="#555" stroke-width="1.300"/></svg>
  <svg class="fi" style="top:138.3px"><use href="#ffoldo"/></svg><div class="fn sel" style="top:135.5px;letter-spacing:0.15px">All scenarios</div>
  <svg class="fi" style="top:167.9px"><use href="#ffold"/></svg><div class="fn" style="top:165.1px;letter-spacing:0.72px">Uncategorized</div>
  <div class="abs" style="left:34px;top:207px;width:250px;height:1px;background:#e7e8ed"></div>
  <svg class="fi" style="top:232.8px"><use href="#ffold"/></svg><div class="fn" style="top:230.0px;letter-spacing:0.50px">Agent Sub Scenarios</div><div class="fc" style="top:232.6px">13</div>
  <svg class="fi" style="top:262.7px"><use href="#ffold"/></svg><div class="fn" style="top:259.9px;letter-spacing:0.54px">Agents Operators</div><div class="fc" style="top:262.5px">1</div>
  <svg class="fi" style="top:292.6px"><use href="#ffold"/></svg><div class="fn" style="top:289.8px;letter-spacing:0.56px">Content Repurposing</div><div class="fc" style="top:292.4px">1</div>
  <svg class="fi" style="top:322.5px"><use href="#ffold"/></svg><div class="fn" style="top:319.7px;letter-spacing:0.51px">Demo Setups for YT</div><div class="fc" style="top:322.3px">2</div>
  <svg class="fi" style="top:352.3px"><use href="#ffold"/></svg><div class="fn" style="top:349.5px;letter-spacing:0.44px">Email Classification</div><div class="fc" style="top:352.1px">6</div>
  <svg class="fi" style="top:382.2px"><use href="#ffold"/></svg><div class="fn" style="top:379.4px;letter-spacing:0.32px">hello@ Email Scenarios</div><div class="fc" style="top:382.0px">3</div>
  <svg class="fi" style="top:412.1px"><use href="#ffold"/></svg><div class="fn" style="top:409.3px;letter-spacing:0.52px">Mailerlite Mail list sync</div><div class="fc" style="top:411.9px">2</div>
  <svg class="fi" style="top:442.0px"><use href="#ffold"/></svg><div class="fn" style="top:439.2px;letter-spacing:0.35px">notion@ Email Scenarios</div><div class="fc" style="top:441.8px">6</div>
</div>
<div id="main">
  <div id="hdr">
    <div id="h1" style="letter-spacing:1.23px">All scenarios</div>
    <div id="create"><svg class="abs" style="left:16px;top:13.300px" width="14" height="14" viewBox="0 0 14 14"><path d="M7 0v14M0 7h14" stroke="#f6eaff" stroke-width="1.600"/></svg><span style="letter-spacing:0.25px">Create a new scenario</span></div>
    <div class="tab on" style="left:34.200px;letter-spacing:0.24px">ALL</div>
    <div class="tab" style="left:92.8px;letter-spacing:-0.25px">ACTIVE SCENARIOS</div><div class="tb" style="left:230.6px;width:21px">22</div>
    <div class="tab" style="left:284.6px;letter-spacing:-0.22px">INACTIVE SCENARIOS</div><div class="tb" style="left:436.4px;width:18.6px">17</div>
    <div class="tab" style="left:488.7px;letter-spacing:-0.29px">CONCEPTS</div><div class="tb" style="left:569.4px;width:14.6px">0</div>
    <div id="ul"></div>
  </div>
  <div id="sort"><svg class="abs" style="left:9px;top:10px" width="14" height="12" viewBox="0 0 14 12"><path d="M1 1.500h12M1 6h8M1 10.500h4.500" stroke="#555" stroke-width="1.500" stroke-linecap="round"/></svg><span style="letter-spacing:0.55px">Sort by: A-Z</span></div>
<div class="row" style="top:222px"><div class="ic" style="background:#fcfcfc"><div class="ig"><div style="background:#e3513f"><svg><use href="#gmail"/></svg></div><div style="background:#dc3d2a"><svg><use href="#gmail"/></svg></div></div></div><div class="ti" style="left:273px;top:5.2px;letter-spacing:0.38px">[Archive] Prod: Icon Information To Review Tagger on reply</div><svg class="mi" style="left:272.1px;top:33.1px"><use href="#mfolder"/></svg><div class="m" style="left:290.5px;top:30.2px;letter-spacing:0.17px">Email Classification</div><svg class="mi" style="left:431.5px;top:32.4px"><use href="#mgear"/></svg><div class="m" style="left:450.2px;top:30.2px;letter-spacing:0px">0</div><svg class="mi" style="left:467.8px;top:34.1px"><use href="#mchev"/></svg><div class="m" style="left:483.7px;top:30.2px;letter-spacing:0px">0</div><svg class="mi" style="left:504.2px;top:32.1px"><use href="#muser"/></svg><div class="m" style="left:520.9px;top:30.2px;letter-spacing:0.44px">Tom Jewson</div><svg class="mi c" style="left:612.3px;top:32.1px"><use href="#mcal"/></svg><div class="m" style="left:632.4px;top:30.2px;letter-spacing:0.47px">7 Jun 2024</div><svg class="st"><use href="#clock"/></svg><div class="tg"><i></i><b>OFF</b></div><div class="dd"></div></div>
<div class="row" style="top:292px"><div class="ic"><div class="ig"><div style="background:#000"><svg><use href="#notion"/></svg></div><div style="background:#000"><svg><use href="#notion"/></svg></div><div style="background:#5b9bf5"><svg><use href="#gdocs"/></svg></div><div class="pl" style="background:#000">+5</div></div></div><div class="ti" style="left:273px;top:5.2px;letter-spacing:0.31px">Auto-Invoicing: Notion X Google Docs X ChatGPT Templated</div><svg class="mi" style="left:271.5px;top:32.4px"><use href="#mgear"/></svg><div class="m" style="left:290.2px;top:30.2px;letter-spacing:0px">0</div><svg class="mi" style="left:307.3px;top:34.1px"><use href="#mchev"/></svg><div class="m" style="left:323.2px;top:30.2px;letter-spacing:0px">0</div><svg class="mi" style="left:344.2px;top:32.1px"><use href="#muser"/></svg><div class="m" style="left:360.7px;top:30.2px;letter-spacing:0.27px">Simon - Better Creating</div><svg class="mi c" style="left:522.6px;top:32.1px"><use href="#mcal"/></svg><div class="m" style="left:543px;top:30.2px;letter-spacing:0.43px">28 Mar 2025</div><svg class="st"><use href="#clock"/></svg><div class="tg"><i></i><b>OFF</b></div><div class="dd"></div></div>
<div class="row" style="top:369.3px"><div class="ic" style="background:#fff"><div class="ig"><div style="background:#4b144e"><svg style="left:9.700px;top:9.900px;width:34.200px;height:34.200px"><use href="#slack"/></svg></div><div style="background:#6f00cc"><svg><use href="#agent"/></svg></div><div style="background:#4b144e"><svg style="left:9.700px;top:9.900px;width:34.200px;height:34.200px"><use href="#slack"/></svg></div></div></div><div class="ti" style="left:271.7px;top:-5.5px;letter-spacing:0.30px">Content Agent - Slack Operator DEV</div><svg class="mi" style="left:271.1px;top:22.4px"><use href="#mfolder"/></svg><div class="m" style="left:288.7px;top:19.5px;letter-spacing:0.30px">Agents Operators</div><svg class="mi" style="left:418.5px;top:21.7px"><use href="#mgear"/></svg><div class="m" style="left:436.7px;top:19.5px;letter-spacing:0.30px">503</div><svg class="mi" style="left:470.3px;top:23.4px"><use href="#mchev"/></svg><div class="m" style="left:486.7px;top:19.5px;letter-spacing:0.43px">4.0 MB</div><svg class="mi" style="left:545.6px;top:21.4px"><use href="#muser"/></svg><div class="m" style="left:561.7px;top:19.5px;letter-spacing:0.25px">Simon - Better Creating</div><svg class="mi c" style="left:722.8px;top:21.4px"><use href="#mcal"/></svg><div class="m" style="left:743.7px;top:19.5px;letter-spacing:0.12px">18 Apr</div><div class="m" style="left:271px;top:39.5px;letter-spacing:.2px">2025</div><svg class="st"><use href="#bolt"/></svg><div class="tg on"><b>ON</b><i></i></div><div class="dd"></div></div>
<div class="row" style="top:446px"><div class="ic"><div class="ig"><div style="background:#000"><svg><use href="#notion"/></svg></div><div style="background:#9f7fe6"><svg><use href="#tools"/></svg></div><div style="background:#11ab8a"><svg style="left:9.700px;top:9.900px;width:34.200px;height:34.200px"><use href="#openai"/></svg></div><div style="background:#000"><svg><use href="#notion"/></svg></div></div></div><div class="ti" style="left:273px;top:5.2px;letter-spacing:0.28px">Content Repurposing Notion To GPT</div><svg class="mi" style="left:271.5px;top:32.4px"><use href="#mgear"/></svg><div class="m" style="left:290.2px;top:30.2px;letter-spacing:0px">0</div><svg class="mi" style="left:307.3px;top:34.1px"><use href="#mchev"/></svg><div class="m" style="left:323.2px;top:30.2px;letter-spacing:0px">0</div><svg class="mi" style="left:344.2px;top:32.1px"><use href="#muser"/></svg><div class="m" style="left:360.7px;top:30.2px;letter-spacing:0.27px">Simon - Better Creating</div><svg class="mi c" style="left:522.6px;top:32.1px"><use href="#mcal"/></svg><div class="m" style="left:543px;top:30.2px;letter-spacing:0.24px">10 Jun 2024</div><svg class="st"><use href="#clock"/></svg><div class="tg"><i></i><b>OFF</b></div><div class="dd"></div></div>
<div class="row" style="top:516px"><div class="ic"><div class="ig"><div style="background:#e3513f"><svg><use href="#gmail"/></svg></div><div style="background:#0f9f7e"><svg style="left:9.700px;top:9.900px;width:34.200px;height:34.200px"><use href="#openai"/></svg></div><div style="background:#a9d673"><svg><use href="#gear"/></svg></div><div class="pl" style="background:#dc3d2a">+4</div></div></div><div class="ti" style="left:273px;top:5.2px;letter-spacing:0.20px">Demo = Chat GPT Gmail Catagorrisation</div><svg class="mi" style="left:272.1px;top:33.1px"><use href="#mfolder"/></svg><div class="m" style="left:290.5px;top:30.2px;letter-spacing:0.22px">Demo Setups for YT</div><svg class="mi" style="left:436.5px;top:32.4px"><use href="#mgear"/></svg><div class="m" style="left:455.2px;top:30.2px;letter-spacing:0px">0</div><svg class="mi" style="left:472.8px;top:34.1px"><use href="#mchev"/></svg><div class="m" style="left:488.7px;top:30.2px;letter-spacing:0px">0</div><svg class="mi" style="left:509.7px;top:32.1px"><use href="#muser"/></svg><div class="m" style="left:526.3px;top:30.2px;letter-spacing:0.24px">Simon - Better Creating</div><svg class="mi c" style="left:687.8px;top:32.1px"><use href="#mcal"/></svg><div class="m" style="left:708.4px;top:30.2px;letter-spacing:0.42px">22 May 2024</div><svg class="st"><use href="#clock"/></svg><div class="tg"><i></i><b>OFF</b></div><div class="dd"></div></div>
<div class="row" style="top:586px"><div class="ic"><div class="ig"><div class="tly" style="background:#000">tally<sup>*</sup></div><div style="background:#dc3d2a"><svg><use href="#gmail"/></svg></div><div style="background:#0d87e8"><svg><use href="#globe"/></svg></div><div style="background:#dc3d2a"><svg><use href="#gmail"/></svg></div></div></div><div class="ti" style="left:273px;top:5.2px;letter-spacing:0.21px">Dev: Send Email after Tally Form Populated (Refund)</div><svg class="mi" style="left:272.1px;top:33.1px"><use href="#mfolder"/></svg><div class="m" style="left:290.5px;top:30.2px;letter-spacing:0.17px">Email Classification</div><svg class="mi" style="left:431.5px;top:32.4px"><use href="#mgear"/></svg><div class="m" style="left:450.2px;top:30.2px;letter-spacing:0px">0</div><svg class="mi" style="left:467.8px;top:34.1px"><use href="#mchev"/></svg><div class="m" style="left:483.7px;top:30.2px;letter-spacing:0px">0</div><svg class="mi c" style="left:497.3px;top:32.1px"><use href="#mcal"/></svg><div class="m" style="left:517.7px;top:30.2px;letter-spacing:0.54px">6 Jun 2024</div><svg class="st"><use href="#bolt"/></svg><div class="tg"><i></i><b>OFF</b></div><div class="dd"></div></div>
<div class="row" style="top:656.3px"><div class="ic"><div class="ig"><div class="tly" style="background:#000">tally<sup>*</sup></div><div style="background:#dc3d2a"><svg><use href="#gmail"/></svg></div><div style="background:#0d87e8"><svg><use href="#globe"/></svg></div><div style="background:#dc3d2a"><svg><use href="#gmail"/></svg></div></div></div><div class="ti" style="left:273px;top:5.2px;letter-spacing:0.25px">Dev: Send Email after Tally Form Populated (Support)</div><svg class="mi" style="left:272.1px;top:33.1px"><use href="#mfolder"/></svg><div class="m" style="left:290.5px;top:30.2px;letter-spacing:0.17px">Email Classification</div><svg class="mi" style="left:431.5px;top:32.4px"><use href="#mgear"/></svg><div class="m" style="left:450.2px;top:30.2px;letter-spacing:0px">0</div><svg class="mi" style="left:467.8px;top:34.1px"><use href="#mchev"/></svg><div class="m" style="left:483.7px;top:30.2px;letter-spacing:0px">0</div><svg class="mi c" style="left:497.3px;top:32.1px"><use href="#mcal"/></svg><div class="m" style="left:517.7px;top:30.2px;letter-spacing:0.54px">6 Jun 2024</div><svg class="st"><use href="#bolt"/></svg><div class="tg"><i></i><b>OFF</b></div><div class="dd"></div></div>
<div class="row" style="top:726.5px"><div class="ic"><div class="ig"><div class="tly" style="background:#000">tally<sup>*</sup></div><div style="background:#dc3d2a"><svg><use href="#gmail"/></svg></div><div style="background:#0d87e8"><svg><use href="#globe"/></svg></div><div style="background:#dc3d2a"><svg><use href="#gmail"/></svg></div></div></div><div class="ti" style="left:273px;top:5.2px;letter-spacing:0.23px">Dev: Send Email after Tally Form Populated (Upgrade)</div><svg class="mi" style="left:272.1px;top:33.1px"><use href="#mfolder"/></svg><div class="m" style="left:290.5px;top:30.2px;letter-spacing:0.17px">Email Classification</div><svg class="mi" style="left:431.5px;top:32.4px"><use href="#mgear"/></svg><div class="m" style="left:450.2px;top:30.2px;letter-spacing:0px">0</div><svg class="mi" style="left:467.8px;top:34.1px"><use href="#mchev"/></svg><div class="m" style="left:483.7px;top:30.2px;letter-spacing:0px">0</div><svg class="mi c" style="left:497.3px;top:32.1px"><use href="#mcal"/></svg><div class="m" style="left:517.7px;top:30.2px;letter-spacing:0.54px">6 Jun 2024</div><svg class="st"><use href="#bolt"/></svg><div class="tg"><i></i><b>OFF</b></div><div class="dd"></div></div>
<div class="row" style="top:796.5px"><div class="ic"><div class="ig"><div style="background:#e3513f"><svg><use href="#gmail"/></svg></div><div style="background:#0f9f7e"><svg style="left:9.700px;top:9.900px;width:34.200px;height:34.200px"><use href="#openai"/></svg></div><div style="background:#a9d673"><svg><use href="#gear"/></svg></div><div class="pl" style="background:#dc3d2a">+14</div></div></div><div class="ti" style="left:273px;top:5.2px;letter-spacing:0.29px">Dev: Categorise Emails and Autorespond</div><svg class="mi" style="left:272.1px;top:33.1px"><use href="#mfolder"/></svg><div class="m" style="left:290.5px;top:30.2px;letter-spacing:0.17px">Email Classification</div><svg class="mi" style="left:431.5px;top:32.4px"><use href="#mgear"/></svg><div class="m" style="left:450.2px;top:30.2px;letter-spacing:0px">0</div><svg class="mi" style="left:467.8px;top:34.1px"><use href="#mchev"/></svg><div class="m" style="left:483.7px;top:30.2px;letter-spacing:0px">0</div><svg class="mi c" style="left:497.3px;top:32.1px"><use href="#mcal"/></svg><div class="m" style="left:517.7px;top:30.2px;letter-spacing:0.54px">5 Jun 2024</div><svg class="st"><use href="#clock"/></svg><div class="tg"><i></i><b>OFF</b></div><div class="dd"></div></div>
<div class="row" style="top:867px"><div class="ic"><div class="ig"><div style="background:#e3513f"><svg><use href="#gmail"/></svg></div><div style="background:#a4d466"><svg><use href="#gear"/></svg></div><div style="background:#11ab8a"><svg style="left:9.700px;top:9.900px;width:34.200px;height:34.200px"><use href="#openai"/></svg></div><div class="pl" style="background:#9f7fe6">+3</div></div></div><div class="ti" style="left:273px;top:5.2px;letter-spacing:0.21px">Prod: Check Yes Label in Hello@ &amp; Add To CRM</div><svg class="mi" style="left:272.1px;top:33.1px"><use href="#mfolder"/></svg><div class="m" style="left:290.5px;top:30.2px;letter-spacing:0.07px">hello@ Email Scenarios</div><svg class="mi" style="left:456.5px;top:32.4px"><use href="#mgear"/></svg><div class="m" style="left:474.7px;top:30.2px;letter-spacing:0.30px">449</div><svg class="mi" style="left:509.3px;top:34.1px"><use href="#mchev"/></svg><div class="m" style="left:525.7px;top:30.2px;letter-spacing:0.17px">5.5 MB</div><svg class="mi" style="left:582.2px;top:32.1px"><use href="#muser"/></svg><div class="m" style="left:598.7px;top:30.2px;letter-spacing:0.49px">Tom Jewson</div><svg class="mi c" style="left:690.8px;top:32.1px"><use href="#mcal"/></svg><div class="m" style="left:711.2px;top:30.2px;letter-spacing:0.60px">4 Jun 2024</div><svg class="st" style="left:807px;top:17px;width:18px;height:18px"><use href="#warn"/></svg><svg class="st"><use href="#clock"/></svg><div class="tg"><i></i><b>OFF</b></div><div class="dd"></div></div>
  <svg class="abs" style="left:476.500px;top:562.500px" width="16" height="17" viewBox="0 0 16 17"><path d="M4.200 1.600a1.250 1.250 0 0 1 2.500 0v5l1.100.100a1.100 1.100 0 0 1 1.500.300l.800.200a1.100 1.100 0 0 1 1.400.500l.700.300a1.200 1.200 0 0 1 1 1.300v2.700l-1 3.200H6.300L2.500 10.300a1.150 1.150 0 0 1 1.700-1.500z" fill="#fff" stroke="#555" stroke-width="1.200" stroke-linejoin="round" transform="rotate(-14 8 8)"/></svg>
  <div id="sb"><i></i></div>
</div>

</body>
</html>
